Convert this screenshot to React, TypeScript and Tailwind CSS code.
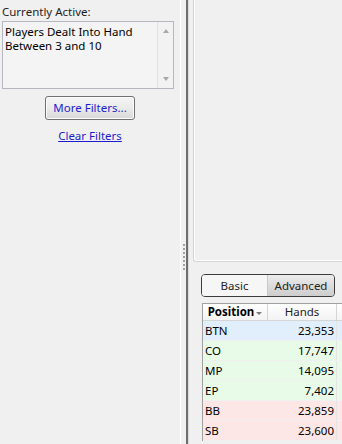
const rows = [
  { pos: 'BTN', hands: '23,353', bg: 'bg-[#e1effc]' },
  { pos: 'CO', hands: '17,747', bg: 'bg-[#e8fbe8]' },
  { pos: 'MP', hands: '14,095', bg: 'bg-[#e8fbe8]' },
  { pos: 'EP', hands: '7,402', bg: 'bg-[#e8fbe8]' },
  { pos: 'BB', hands: '23,859', bg: 'bg-[#fde6e6]' },
  { pos: 'SB', hands: '23,600', bg: 'bg-[#fde6e6]' }
];

const FilterPanel = () => {
  return (
    <div className="flex w-[180px] shrink-0 flex-col px-[2px] pt-[4px]">
      <p className="text-[11.5px] leading-[15px] text-[#1e1e1e]">Currently Active:</p>
      <div className="mt-[2px] flex h-[68px] w-[172px] border border-[#b5b8c0] bg-[#f4f4f4]">
        <div className="flex-1 px-[2px] pt-[3px] text-[11.5px] leading-[14px] text-black">
          Players Dealt Into Hand
          <br />
          Between 3 and 10
        </div>
        <div className="flex w-[16px] flex-col items-center justify-between border-l border-[#e2e2e2] bg-[#f2f2f2] py-[7px]">
          <span className="h-0 w-0 border-x-[3.5px] border-b-[4px] border-x-transparent border-b-[#a8a8a8]" />
          <span className="h-0 w-0 border-x-[3.5px] border-t-[4px] border-x-transparent border-t-[#a8a8a8]" />
        </div>
      </div>
      <div className="mt-[7px] flex flex-col items-center">
        <button
          type="button"
          className="h-[24px] w-[90px] rounded-[3px] border border-[#707070] bg-gradient-to-b from-[#f4f4f4] via-[#ebebeb] to-[#d8d8d8] text-[11.5px] text-[#1c1ccf] shadow-[inset_0_0_0_1px_#fcfcfc]"
        >
          More Filters...
        </button>
        <a className="mt-[8px] text-[11.5px] leading-[15px] text-[#1c1ccf] underline">Clear Filters</a>
      </div>
    </div>
  );
};

const Splitter = () => {
  return (
    <div className="flex w-[13px] shrink-0">
      <div className="w-px bg-white" />
      <div className="flex w-[5px] flex-col items-center pt-[244px]">
        {[0, 1, 2, 3, 4, 5, 6].map((i) => (
          <span key={i} className="mb-[2px] h-[2px] w-[2px] bg-[#a0a0a0]" />
        ))}
      </div>
      <div className="w-[2px] bg-[#6e6e6e]" />
      <div className="w-px bg-[#dcdcdc]" />
    </div>
  );
};

const StatsPanel = () => {
  return (
    <div className="flex min-w-0 flex-1 flex-col">
      <div className="h-[262px] rounded-bl-[3px] border-b border-l border-[#d5d5d5] shadow-[inset_1px_-1px_0_#ffffff]" />
      <div className="ml-[8px] mt-[12px] flex h-[23px] w-[134px] overflow-hidden rounded-[4px] border border-[#3c3c3c] text-[11.5px]">
        <div className="flex w-[66px] items-center justify-center border-r border-[#c8c8c8] bg-[#f6f6f6] text-[#222]">Basic</div>
        <div className="flex flex-1 items-center justify-center bg-gradient-to-b from-[#ececec] to-[#cdcdcd] text-[#222]">Advanced</div>
      </div>
      <div className="ml-[9px] mt-[6px] w-[160px] border-l border-t border-[#a0a0a0] bg-white text-[11.5px]">
        <div className="flex h-[17px] border-b border-[#d5d5d5] bg-gradient-to-b from-white to-[#f3f3f3]">
          <div className="flex w-[65px] items-center justify-center border-r border-[#d5d5d5] font-bold text-black">
            Position
            <span className="ml-[2px] mt-[3px] h-0 w-0 border-x-[3px] border-t-[3px] border-x-transparent border-t-[#7a7a7a]" />
          </div>
          <div className="flex w-[69px] items-center justify-center border-r border-[#d5d5d5] text-[#222]">Hands</div>
          <div className="flex-1" />
        </div>
        {rows.map((r) => (
          <div key={r.pos} className={`flex h-[20px] items-center border-b border-[#f0f0f0] ${r.bg}`}>
            <div className="w-[65px] pl-[2px] text-black">{r.pos}</div>
            <div className="w-[69px] border-r border-[#e4e4e4] pr-[2px] text-right leading-[19px] text-black">{r.hands}</div>
            <div className="flex-1" />
          </div>
        ))}
      </div>
    </div>
  );
};

export default function App() {
  return (
    <div
      className="flex h-[444px] w-[342px] overflow-hidden bg-[#f0f0f0]"
      style={{ fontFamily: '"Noto Sans", "Open Sans", sans-serif' }}
    >
      <FilterPanel />
      <Splitter />
      <StatsPanel />
    </div>
  );
}
